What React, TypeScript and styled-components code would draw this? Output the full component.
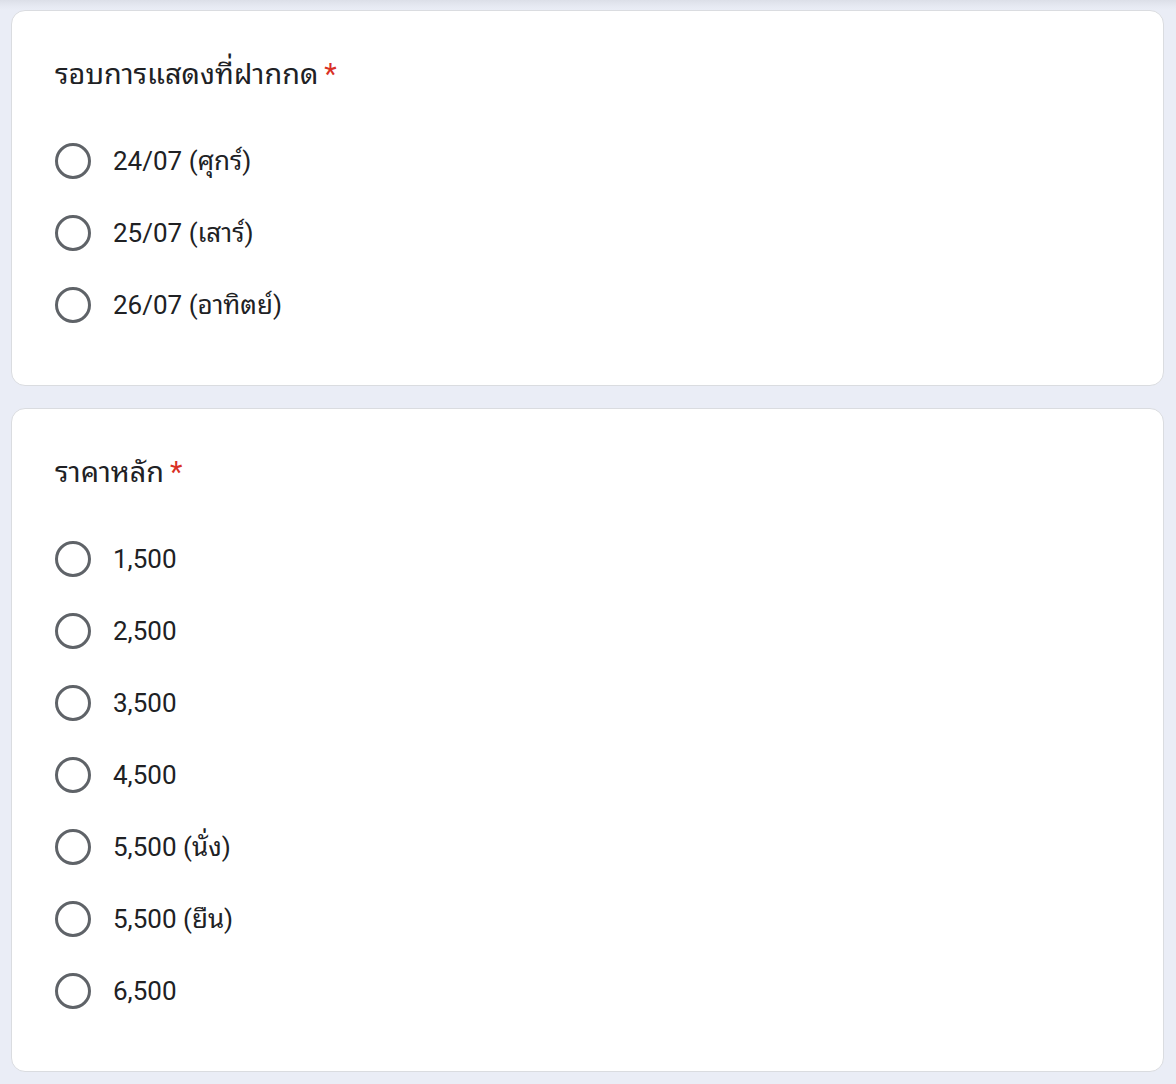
import React from "react";
import styled, { createGlobalStyle } from "styled-components";

const GlobalStyle = createGlobalStyle`
  html, body {
    margin: 0;
    padding: 0;
    background: #eaedf6;
  }
  body {
    font-family: Roboto, "Noto Sans Thai Looped", Loma, Garuda, "Tlwg Typo", Tahoma, "Noto Sans Thai", "Noto Sans", sans-serif;
    color: #202124;
  }
`;

const Page = styled.div`
  min-height: 1084px;
  box-sizing: border-box;
  padding: 10px 12px 12px 11px;
  background: linear-gradient(#dcdfe8 0px, #e6e9f2 6px, #eaedf6 10px) no-repeat;
  background-color: #eaedf6;
  display: flex;
  flex-direction: column;
  gap: 22px;
`;

const Card = styled.section`
  background: #ffffff;
  border: 1px solid #dadce0;
  border-radius: 14px;
  padding: 42px 43px 44px 43px;
  display: flex;
  flex-direction: column;
  gap: 28px;
`;

const Title = styled.h2`
  margin: 0;
  font-size: 28.8px;
  font-weight: 400;
  line-height: 43px;
  height: 44px;
  color: #202124;
  letter-spacing: 0;
`;

const Required = styled.span`
  color: #d93025;
  margin-left: 6px;
`;

const OptionList = styled.div`
  display: flex;
  flex-direction: column;
`;

const OptionRow = styled.label`
  display: flex;
  align-items: center;
  height: 72px;
  gap: 22px;
  cursor: pointer;
`;

const RadioCircle = styled.span`
  box-sizing: border-box;
  width: 36px;
  height: 36px;
  border-radius: 50%;
  border: 3.5px solid #5f6368;
  flex: none;
`;

const OptionText = styled.span`
  font-size: 26px;
  line-height: 36px;
  color: #202124;
`;

type Question = { title: string; options: string[] };

const questions: Question[] = [
  {
    title: "รอบการแสดงที่ฝากกด",
    options: ["24/07 (ศุกร์)", "25/07 (เสาร์)", "26/07 (อาทิตย์)"],
  },
  {
    title: "ราคาหลัก",
    options: ["1,500", "2,500", "3,500", "4,500", "5,500 (นั่ง)", "5,500 (ยืน)", "6,500"],
  },
];

export default function App() {
  return (
    <>
      <GlobalStyle />
      <Page>
        {questions.map((q) => (
          <Card key={q.title}>
            <Title>
              {q.title}
              <Required>*</Required>
            </Title>
            <OptionList>
              {q.options.map((o) => (
                <OptionRow key={o}>
                  <RadioCircle />
                  <OptionText>{o}</OptionText>
                </OptionRow>
              ))}
            </OptionList>
          </Card>
        ))}
      </Page>
    </>
  );
}
